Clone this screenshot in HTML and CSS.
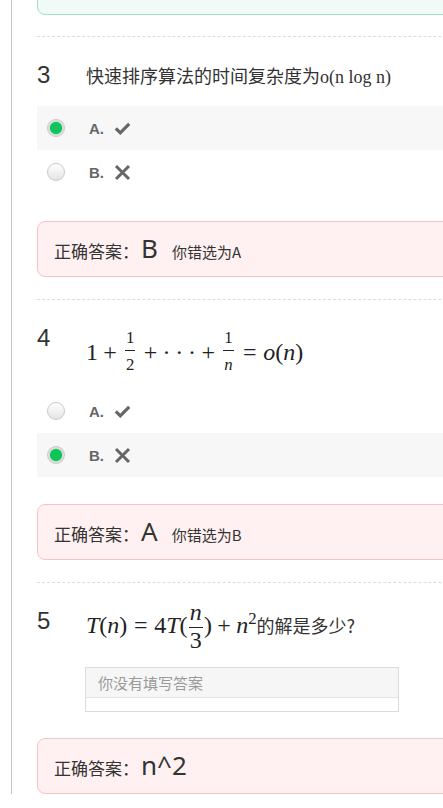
FILE: index.html
```html
<!DOCTYPE html>
<html lang="zh-CN">
<head>
<meta charset="utf-8">
<title>答题结果</title>
<link rel="stylesheet" href="styles.css">
</head>
<body>
<div class="page">
  <div class="card card-ok"></div>

  <section class="question">
    <div class="q-head">
      <span class="q-num">3</span>
      <div class="q-text">快速排序算法的时间复杂度为<span class="serif">o(n log n)</span></div>
    </div>
    <div class="options">
      <div class="option selected">
        <span class="radio on"></span><span class="opt-label">A.</span>
        <svg class="icon" width="17" height="13" viewBox="0 0 17 13"><path d="M1.8 6.4 L6.3 10.8 L15.2 1.9" fill="none" stroke="#666" stroke-width="3.2"/></svg>
      </div>
      <div class="option">
        <span class="radio"></span><span class="opt-label">B.</span>
        <svg class="icon" width="17" height="17" viewBox="0 0 17 17"><path d="M2 2 L15 15 M15 2 L2 15" fill="none" stroke="#666" stroke-width="3"/></svg>
      </div>
    </div>
    <div class="card card-wrong">
      <span class="ans-label">正确答案：</span><span class="ans-value">B</span><span class="ans-note">你错选为A</span>
    </div>
  </section>

  <section class="question">
    <div class="q-head q-head-frac">
      <span class="q-num">4</span>
      <div class="math"><span class="mn">1</span><span class="mbin">+</span><span class="frac"><span class="num">1</span><span class="den">2</span></span><span class="mbin">+</span><span class="cdots">···</span><span class="mbin">+</span><span class="frac"><span class="num">1</span><span class="den"><i>n</i></span></span><span class="mrel">=</span><i>o</i>(<i>n</i>)</div>
    </div>
    <div class="options">
      <div class="option">
        <span class="radio"></span><span class="opt-label">A.</span>
        <svg class="icon" width="17" height="13" viewBox="0 0 17 13"><path d="M1.8 6.4 L6.3 10.8 L15.2 1.9" fill="none" stroke="#666" stroke-width="3.2"/></svg>
      </div>
      <div class="option selected">
        <span class="radio on"></span><span class="opt-label">B.</span>
        <svg class="icon" width="17" height="17" viewBox="0 0 17 17"><path d="M2 2 L15 15 M15 2 L2 15" fill="none" stroke="#666" stroke-width="3"/></svg>
      </div>
    </div>
    <div class="card card-wrong">
      <span class="ans-label">正确答案：</span><span class="ans-value">A</span><span class="ans-note">你错选为B</span>
    </div>
  </section>

  <section class="question">
    <div class="q-head q-head-dfrac">
      <span class="q-num">5</span>
      <div class="q-text"><span class="math"><i>T</i>(<i>n</i>)<span class="mrel">=</span>4<i>T</i>(<span class="frac dfrac"><span class="num"><i>n</i></span><span class="den">3</span></span>)<span class="mbin">+</span><i>n</i><sup class="sup">2</sup></span>的解是多少?</div>
    </div>
    <div class="fill">
      <div class="fill-input">你没有填写答案</div>
      <div class="fill-extra"></div>
    </div>
    <div class="card card-wrong card-fill">
      <span class="ans-label">正确答案：</span><span class="ans-value">n^2</span>
    </div>
  </section>
</div>
</body>
</html>
```

FILE: styles.css
```css
html, body {
  margin: 0;
  padding: 0;
  background: #fff;
  overflow: hidden;
}

body {
  font-family: "Noto Sans", "Noto Sans CJK SC", sans-serif;
  color: #333;
}

.page {
  margin-left: 11px;
  border-left: 1px solid #c9c9c9;
  padding-left: 25px;
  width: 560px;
  min-height: 808px;
}

.card {
  box-sizing: border-box;
  border-radius: 8px;
}

.card-ok {
  margin-top: -41px;
  height: 56px;
  background: #f0faf7;
  border: 1px solid #9fe2ca;
  margin-bottom: 21px;
}

.card-wrong {
  height: 56px;
  background: #fff1f1;
  border: 1px solid #f6c3c3;
  margin-top: 27px;
  margin-bottom: 22px;
  padding-left: 16px;
  display: flex;
  align-items: baseline;
  padding-top: 11px;
}

.card-fill {
  margin-top: 26px;
}

.ans-label {
  font-family: "Noto Sans CJK SC", sans-serif;
  font-size: 17px;
  color: #333;
}

.ans-value {
  font-family: "Noto Sans", "Open Sans", sans-serif;
  font-size: 26px;
  line-height: 30px;
  color: #333;
  margin-left: 2px;
}

.ans-note {
  font-family: "Noto Sans CJK SC", sans-serif;
  font-size: 15px;
  color: #333;
  margin-left: 14px;
}

.question {
  border-top: 1px dashed #dcdcdc;
  padding-top: 23px;
}

.q-head {
  display: flex;
  align-items: flex-start;
  height: 30px;
  margin-bottom: 16px;
}

.q-head-frac {
  height: 50px;
}

.q-head-dfrac {
  height: 45px;
}

.q-num {
  flex: 0 0 49px;
  font-family: "Liberation Sans", Arial, sans-serif;
  font-size: 24px;
  line-height: 30px;
  color: #333;
}

.q-text {
  font-family: "Noto Sans CJK SC", sans-serif;
  font-size: 18px;
  line-height: 30px;
  color: #333;
  white-space: nowrap;
}

.serif {
  font-family: "Liberation Serif", serif;
}

.math {
  font-family: "Liberation Serif", "DejaVu Serif", serif;
  font-size: 24px;
  line-height: 1.15;
  color: #222;
  white-space: nowrap;
}

.q-head-frac .math {
  padding-top: 2px;
}

.math i {
  font-style: italic;
}

.mbin {
  margin: 0 0.222em;
}

.mrel {
  margin: 0 0.278em;
}

.cdots {
  letter-spacing: 0.2em;
  margin-right: -0.2em;
}

.frac {
  display: inline-flex;
  flex-direction: column;
  text-align: center;
  vertical-align: 17px;
  margin: 0 0.12em;
}

.frac .num,
.frac .den {
  font-size: 0.7em;
  padding: 0 1px;
}

.frac .num {
  line-height: 1.51;
  border-bottom: 1px solid #222;
}

.frac .den {
  line-height: 1.65;
}

.dfrac {
  vertical-align: 13px;
  margin: -9px 0.05em 0;
}

.dfrac .num,
.dfrac .den {
  font-size: 1em;
}

.dfrac .num {
  line-height: 1.26;
}

.dfrac .den {
  line-height: 1;
}

.sup {
  font-size: 0.7em;
  vertical-align: 0.55em;
  line-height: 0;
}

.options {
  display: flex;
  flex-direction: column;
}

.option {
  height: 44px;
  display: flex;
  align-items: center;
  padding-left: 10px;
}

.option.selected {
  background: #f7f7f7;
}

.radio {
  width: 18px;
  height: 18px;
  box-sizing: border-box;
  border-radius: 50%;
  border: 1px solid #c9c9c9;
  background: linear-gradient(#ffffff, #e4e4e4);
  margin-right: 24px;
  flex: none;
}

.radio.on {
  background: radial-gradient(circle, #0ec55a 0, #0ec55a 5.6px, #dcdcdc 6.6px, #e9e9e9 100%);
}

.opt-label {
  font-family: "Liberation Sans", Arial, sans-serif;
  font-weight: bold;
  font-size: 15px;
  color: #666;
  margin-right: 10px;
}

.icon {
  display: block;
}

.fill {
  width: 314px;
  height: 45px;
  box-sizing: border-box;
  border: 1px solid #dcdcdc;
  margin-left: 48px;
}

.fill-input {
  height: 29px;
  background: #f6f6f6;
  border-bottom: 1px solid #e4e4e4;
  padding-left: 12px;
  font-family: "Noto Sans CJK SC", sans-serif;
  font-size: 15px;
  line-height: 29px;
  color: #9a9a9a;
}
```
